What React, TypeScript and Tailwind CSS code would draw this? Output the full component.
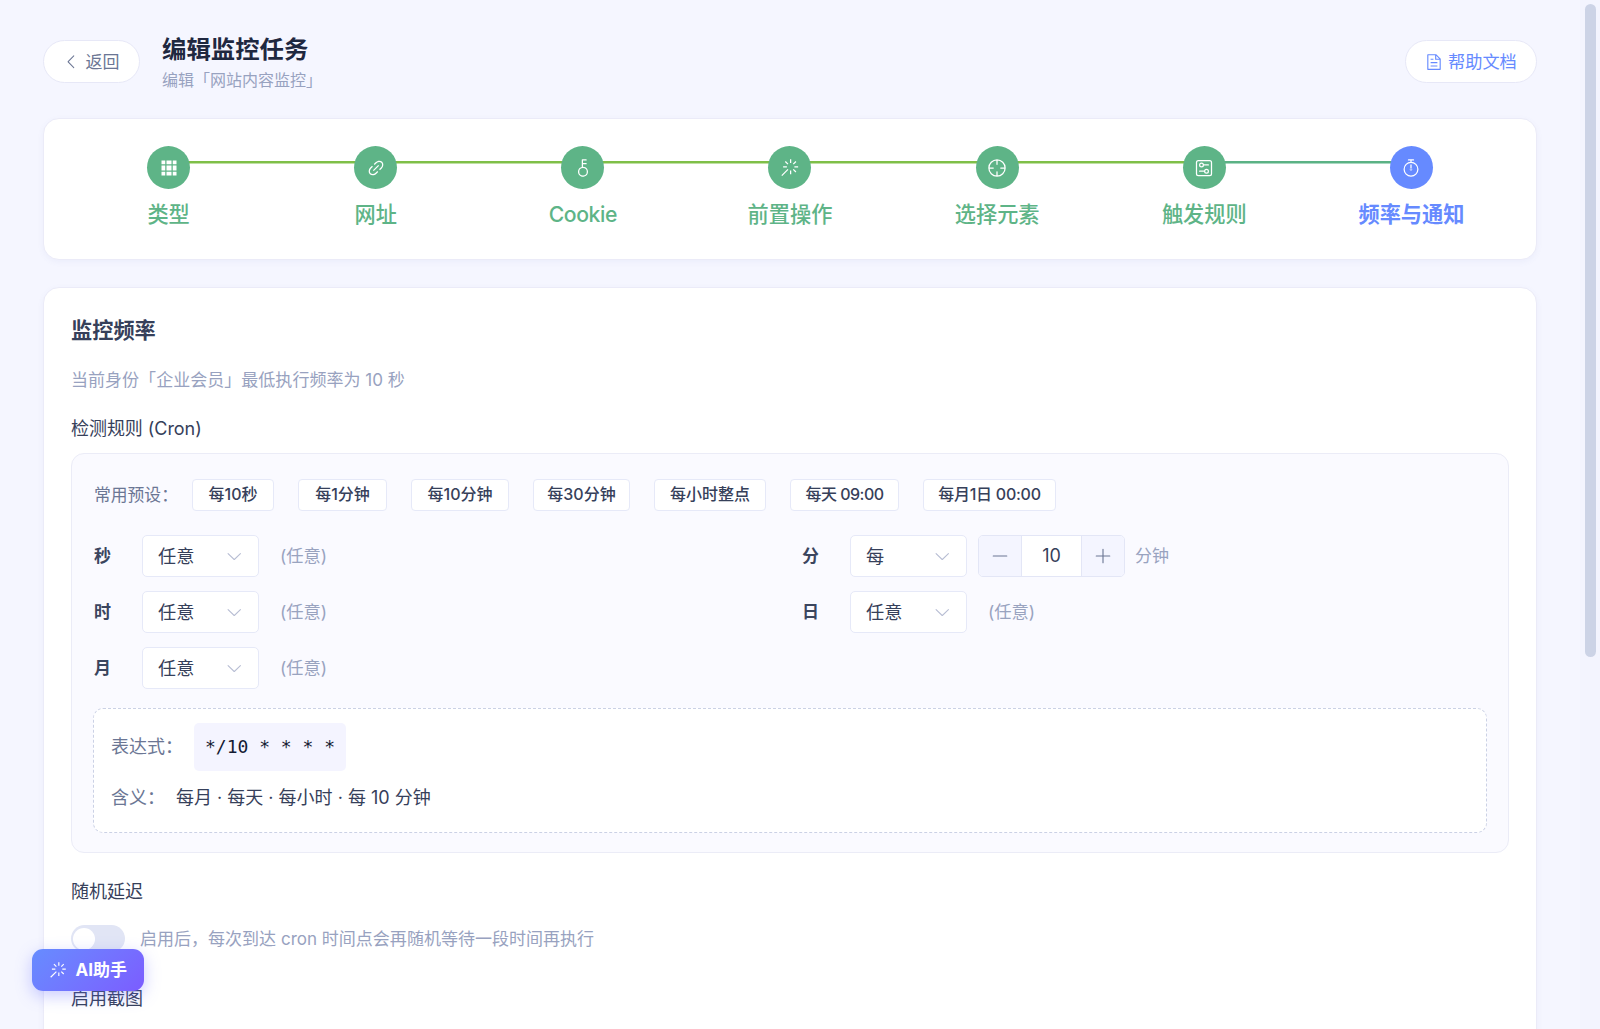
import { useState } from 'react'
import clsx from 'clsx'

// Icon outlines on a 1024 grid
const ICONS = {
  arrowLeft:
    'M609.408 149.376 277.76 489.6a32 32 0 0 0 0 44.672l331.648 340.352a29.12 29.12 0 0 0 41.728 0 30.592 30.592 0 0 0 0-42.752L339.264 511.936l311.872-319.872a30.592 30.592 0 0 0 0-42.688 29.12 29.12 0 0 0-41.728 0z',
  arrowDown:
    'M831.872 340.864 512 652.672 192.128 340.864a30.592 30.592 0 0 0-42.752 0 29.12 29.12 0 0 0 0 41.6L489.664 714.24a32 32 0 0 0 44.672 0l340.288-331.712a29.12 29.12 0 0 0 0-41.728 30.592 30.592 0 0 0-42.752 0z',
  document:
    'M832 384H576V128H192v768h640zm-26.496-64L640 154.496V320zM160 64h480l256 256v608a32 32 0 0 1-32 32H160a32 32 0 0 1-32-32V96a32 32 0 0 1 32-32m160 448h384v64H320zm0-192h160v64H320zm0 384h384v64H320z',
  grid: 'M640 384v256H384V384zm64 0h192v256H704zm-64 512H384V704h256zm64 0V704h192v192zm-64-768v192H384V128zm64 0h192v192H704zM320 384v256H128V384zm0 512H128V704h192zm0-768v192H128V128z',
  link: 'M715.648 625.152 670.4 579.904l90.496-90.56c75.008-74.944 85.12-186.368 22.656-248.896-62.528-62.464-173.952-52.352-248.96 22.656L444.16 353.6l-45.248-45.248 90.496-90.496c100.032-99.968 251.968-110.08 339.456-22.656 87.488 87.488 77.312 239.424-22.656 339.456l-90.496 90.496zm-90.496 90.496-90.496 90.496C434.624 906.112 282.688 916.224 195.2 828.8c-87.488-87.488-77.312-239.424 22.656-339.456l90.496-90.496 45.248 45.248-90.496 90.56c-75.008 74.944-85.12 186.368-22.656 248.896 62.528 62.464 173.952 52.352 248.96-22.656l90.496-90.496zm0-362.048 45.248 45.248L398.848 670.4 353.6 625.152z',
  key: 'M448 456.064V96a32 32 0 0 1 32-32.064L672 64a32 32 0 0 1 0 64H512v128h160a32 32 0 0 1 0 64H512v128a256 256 0 1 1-64 8.064M512 896a192 192 0 1 0 0-384 192 192 0 0 0 0 384',
  magic:
    'M512 64h64v192h-64zm0 576h64v192h-64zM160 480v-64h192v64zm576 0v-64h192v64zM249.856 199.04l45.248-45.184L430.848 289.6 385.6 334.848 249.856 199.104zM657.152 606.4l45.248-45.248 135.744 135.744-45.248 45.248zM114.048 923.2 68.8 877.952l316.8-316.8 45.248 45.248zM702.4 334.848 657.152 289.6l135.744-135.744 45.248 45.248z',
  aim: 'M512 896a384 384 0 1 0 0-768 384 384 0 0 0 0 768m0 64a448 448 0 1 1 0-896 448 448 0 0 1 0 896M512 96a32 32 0 0 1 32 32v192a32 32 0 0 1-64 0V128a32 32 0 0 1 32-32m0 576a32 32 0 0 1 32 32v192a32 32 0 1 1-64 0V704a32 32 0 0 1 32-32M96 512a32 32 0 0 1 32-32h192a32 32 0 0 1 0 64H128a32 32 0 0 1-32-32m576 0a32 32 0 0 1 32-32h192a32 32 0 1 1 0 64H704a32 32 0 0 1-32-32',
  setUp:
    'M224 160a64 64 0 0 0-64 64v576a64 64 0 0 0 64 64h576a64 64 0 0 0 64-64V224a64 64 0 0 0-64-64zm0-64h576a128 128 0 0 1 128 128v576a128 128 0 0 1-128 128H224A128 128 0 0 1 96 800V224A128 128 0 0 1 224 96M384 416a64 64 0 1 0 0-128 64 64 0 0 0 0 128m0 64a128 128 0 1 1 0-256 128 128 0 0 1 0 256M480 320h256q32 0 32 32t-32 32H480q-32 0-32-32t32-32m160 416a64 64 0 1 0 0-128 64 64 0 0 0 0 128m0 64a128 128 0 1 1 0-256 128 128 0 0 1 0 256M288 640h256q32 0 32 32t-32 32H288q-32 0-32-32t32-32',
  timer:
    'M512 896a320 320 0 1 0 0-640 320 320 0 0 0 0 640m0 64a384 384 0 1 1 0-768 384 384 0 0 1 0 768M512 320a32 32 0 0 1 32 32l-.512 224a32 32 0 1 1-64 0L480 352a32 32 0 0 1 32-32M448 576a64 64 0 1 0 128 0 64 64 0 1 0-128 0m96-448v128h-64V128h-96a32 32 0 0 1 0-64h256a32 32 0 1 1 0 64z',
  minus: 'M128 544h768a32 32 0 1 0 0-64H128a32 32 0 0 0 0 64',
  plus: 'M480 480V128a32 32 0 0 1 64 0v352h352a32 32 0 1 1 0 64H544v352a32 32 0 1 1-64 0V544H128a32 32 0 0 1 0-64z',
}

type IconName = keyof typeof ICONS

const steps: { icon: IconName; label: string }[] = [
  { icon: 'grid', label: '类型' },
  { icon: 'link', label: '网址' },
  { icon: 'key', label: 'Cookie' },
  { icon: 'magic', label: '前置操作' },
  { icon: 'aim', label: '选择元素' },
  { icon: 'setUp', label: '触发规则' },
  { icon: 'timer', label: '频率与通知' },
]

const presets = [
  { label: '每10秒', width: 'w-[82px]' },
  { label: '每1分钟', width: 'w-[89px]' },
  { label: '每10分钟', width: 'w-[98px]' },
  { label: '每30分钟', width: 'w-[97px]' },
  { label: '每小时整点', width: 'w-[112px]' },
  { label: '每天 09:00', width: 'w-[109px] tracking-[-0.5px]' },
  { label: '每月1日 00:00', width: 'w-[133px] tracking-[-0.25px]' },
]

function Icon({ name, className }: { name: IconName; className?: string }) {
  return (
    <svg viewBox="0 0 1024 1024" fill="currentColor" className={clsx('shrink-0', className)}>
      <path d={ICONS[name]} />
    </svg>
  )
}

function Select({ value }: { value: string }) {
  return (
    <button className="flex h-[42px] w-[117px] items-center justify-between rounded-[5px] border border-[#e6e9f8] bg-white pr-[15px] pl-[15px] text-[18.2px] text-[#36405a]">
      {value}
      <Icon name="arrowDown" className="size-[18.5px] text-[#b7bdd3]" />
    </button>
  )
}

function Field({ label, value, children }: { label: string; value: string; children?: React.ReactNode }) {
  return (
    <div className="flex h-[42px] w-[708px] items-center">
      <span className="w-[48px] text-[17px] font-bold text-[#3b455e]">{label}</span>
      <Select value={value} />
      {children ?? <span className="ml-[21px] text-[17.3px] text-[#99a3bf]">(任意)</span>}
    </div>
  )
}

export default function App() {
  const [minute, setMinute] = useState(10)
  const [delay, setDelay] = useState(false)

  return (
    <div className="relative flex h-[1029px] w-[1600px] overflow-hidden bg-[#f5f6ff] font-['Inter','Noto_Sans_CJK_SC',sans-serif] leading-none text-[#36405a]">
      <main className="w-[1580px] pl-[43px]">
        <div className="w-[1494px]">
          {/* Header */}
          <header className="flex h-[118px] items-start pt-[34px]">
            <button className="mt-[6px] flex h-[43px] w-[97px] items-center rounded-full border border-[#e7e8f7] bg-white pt-px pl-[19px] text-[17px] text-[#6b7694]">
              <Icon name="arrowLeft" className="mr-[5px] size-[17.5px]" />
              返回
            </button>
            <div className="ml-[22px]">
              <h1 className="h-[31px] text-[24.4px] leading-[30px] font-bold whitespace-nowrap text-[#1f2840]">编辑监控任务</h1>
              <p className="h-[30px] text-[16px] leading-[30px] whitespace-nowrap text-[#98a2c0]">编辑「网站内容监控」</p>
            </div>
            <button className="mt-[6px] ml-auto flex h-[43px] w-[132px] items-center rounded-full border border-[#e7e8f7] bg-white pt-px pl-[19px] text-[17.2px] whitespace-nowrap text-[#668aff]">
              <Icon name="document" className="mr-[5px] size-[18px]" />
              帮助文档
            </button>
          </header>

          {/* Steps */}
          <section className="h-[142px] rounded-[16px] border border-[#ebebf8] bg-white px-[21px] pt-[27px] shadow-[0_2px_6px_rgba(90,100,180,0.06)]">
            <ol className="grid grid-cols-7">
              {steps.map((step, i) => {
                const active = i === steps.length - 1
                return (
                  <li key={step.label} className="relative flex flex-col items-center">
                    {!active && (
                      <span
                        className={clsx(
                          'absolute top-[15px] left-1/2 h-[3px] w-full border-b',
                          i === steps.length - 2 ? 'border-[#a9d8c1] bg-[#5bb285]' : 'border-[#bfe0a3] bg-[#7fbf48]',
                        )}
                      />
                    )}
                    <span
                      className={clsx(
                        'relative z-10 flex size-[43px] items-center justify-center rounded-full text-white',
                        active ? 'bg-[#668aff]' : 'bg-[#5eb487]',
                      )}
                    >
                      <Icon name={step.icon} className="size-[20px]" />
                    </span>
                    <span
                      className={clsx(
                        'mt-[9px] text-[21.2px] leading-[32px] whitespace-nowrap',
                        active ? 'font-bold text-[#668aff]' : 'font-medium text-[#5eb487]',
                        step.label === 'Cookie' && 'tracking-[-0.4px]',
                      )}
                    >
                      {step.label}
                    </span>
                  </li>
                )
              })}
            </ol>
          </section>

          {/* Frequency */}
          <section className="mt-[27px] h-[900px] rounded-[16px] border border-[#ebebf8] bg-white px-[27px] pt-[26px] shadow-[0_2px_6px_rgba(90,100,180,0.06)]">
            <h2 className="h-[32px] text-[21.2px] leading-[32px] font-bold">监控频率</h2>
            <p className="mt-[21px] h-[26px] text-[17.05px] leading-[26px] text-[#98a2c0]">
              当前身份「企业会员」最低执行频率为 10 秒
            </p>
            <p className="mt-[23px] h-[26px] text-[18px] leading-[26px] tracking-[-0.05px]">检测规则 (Cron)</p>

            <div className="mt-[11px] h-[400px] w-[1438px] rounded-[13px] border border-[#ebecf7] bg-[#fafaff] px-[22px] pt-[25px]">
              <div className="flex h-[32px] items-center">
                <span className="w-[98px] text-[16.8px] text-[#6b7694]">常用预设：</span>
                <div className="flex gap-[24px]">
                  {presets.map((p) => (
                    <button
                      key={p.label}
                      className={clsx(
                        'h-[32px] rounded-[4px] border border-[#e6e9f8] bg-white pb-[2px] text-[16px] font-medium whitespace-nowrap',
                        p.width,
                      )}
                    >
                      {p.label}
                    </button>
                  ))}
                </div>
              </div>

              <div className="mt-[24px] grid grid-cols-[708px_1fr] gap-y-[14px]">
                <Field label="秒" value="任意" />
                <Field label="分" value="每">
                  <div className="ml-[11px] flex h-[42px] w-[147px] overflow-hidden rounded-[5px] border border-[#e3e6f6] bg-white">
                    <button
                      className="flex w-[43px] items-center justify-center border-r border-[#e3e6f6] bg-[#f4f5ff] text-[#6b7694]"
                      onClick={() => setMinute(minute - 1)}
                    >
                      <Icon name="minus" className="size-[18px]" />
                    </button>
                    <span className="flex flex-1 items-center justify-center text-[18px]">{minute}</span>
                    <button
                      className="flex w-[43px] items-center justify-center border-l border-[#e3e6f6] bg-[#f4f5ff] text-[#6b7694]"
                      onClick={() => setMinute(minute + 1)}
                    >
                      <Icon name="plus" className="size-[18px]" />
                    </button>
                  </div>
                  <span className="ml-[10px] text-[17px] text-[#99a3bf]">分钟</span>
                </Field>
                <Field label="时" value="任意" />
                <Field label="日" value="任意" />
                <Field label="月" value="任意" />
              </div>

              <div className="mt-[19px] -ml-px h-[125px] w-[1394px] rounded-[10px] border border-dashed border-[#cbd1e5] bg-white pt-[14px] pl-[17px] text-[18px]">
                <div className="flex h-[48px] items-center">
                  <span className="w-[83px] text-[#6b7694]">表达式：</span>
                  <code className="flex h-[48px] w-[152px] items-center justify-center rounded-[5px] bg-[#f4f4ff] font-['DejaVu_Sans_Mono',monospace] text-[18px] whitespace-pre text-[#141b33]">
                    */{minute} * * * *
                  </code>
                </div>
                <div className="mt-[14px] flex h-[26px] items-center">
                  <span className="w-[65px] text-[#6b7694]">含义：</span>
                  <span>每月 · 每天 · 每小时 · 每 {minute} 分钟</span>
                </div>
              </div>
            </div>

            <p className="mt-[26px] h-[26px] text-[18px] leading-[26px]">随机延迟</p>
            <div className="mt-[20px] flex h-[27px] items-center">
              <button
                className="flex h-[27px] w-[54px] items-center rounded-full bg-[#e1e5f5] px-[2px]"
                onClick={() => setDelay(!delay)}
              >
                <span className={clsx('size-[22px] rounded-full bg-white', delay && 'ml-auto')} />
              </button>
              <span className="mt-[2px] ml-[15px] text-[17.03px] text-[#98a2c0]">
                启用后，每次到达 cron 时间点会再随机等待一段时间再执行
              </span>
            </div>
            <p className="mt-[34px] h-[26px] text-[18px] leading-[26px]">启用截图</p>
          </section>
        </div>
      </main>

      {/* Scrollbar */}
      <div className="flex w-[20px] justify-center bg-[#f3f4fe] pt-[4px] pl-[1px]">
        <span className="h-[653px] w-[11px] rounded-full bg-[#ccd3e6]" />
      </div>

      {/* Floating assistant */}
      <button className="absolute top-[949px] left-[32px] flex h-[42px] w-[112px] items-center rounded-[11px] bg-linear-135 from-[#668cff] to-[#7b5cff] pt-px pl-[17px] text-[17px] font-bold whitespace-nowrap text-white shadow-[0_5px_16px_rgba(102,110,255,0.35)]">
        <Icon name="magic" className="mr-[8px] size-[18.5px]" />
        AI助手
      </button>
    </div>
  )
}
